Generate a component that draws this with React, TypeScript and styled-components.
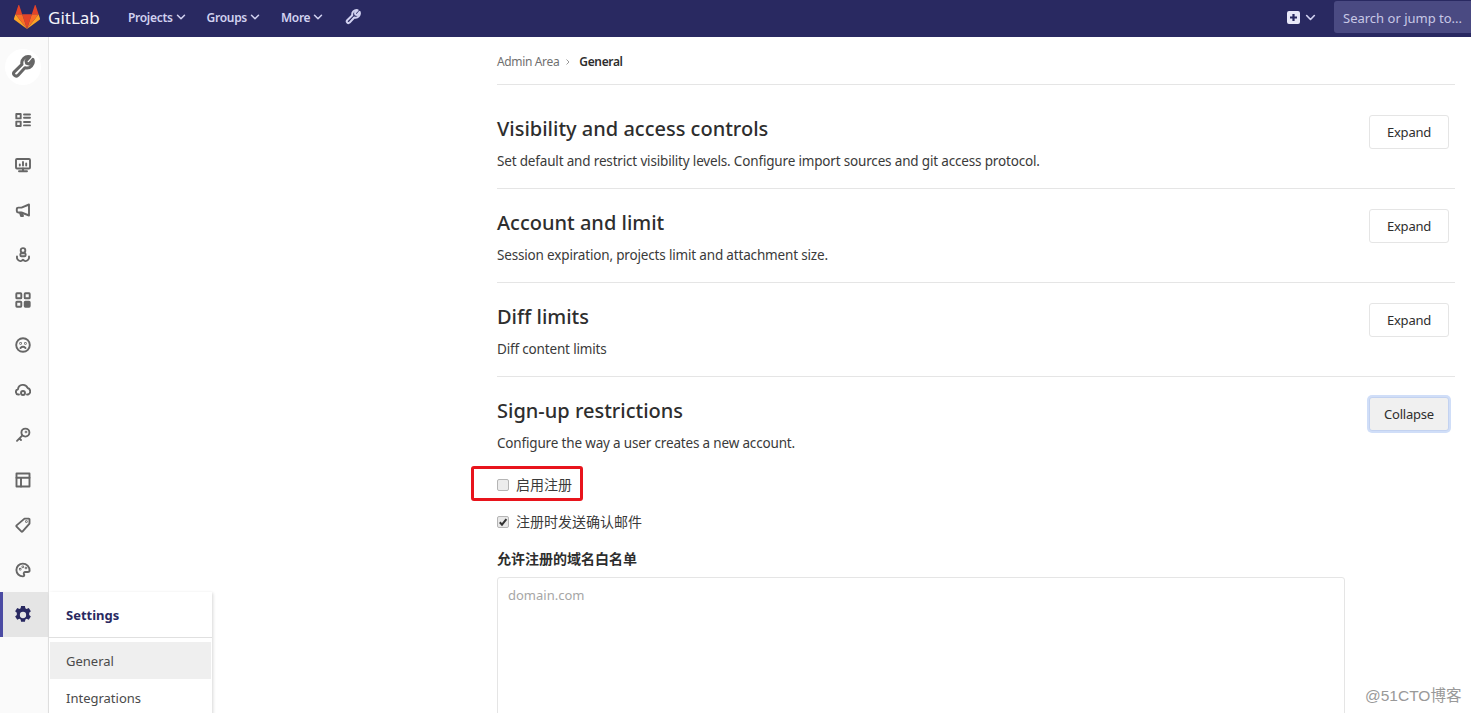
import React from "react";
import styled, { createGlobalStyle } from "styled-components";

const Global = createGlobalStyle`
  html, body { margin: 0; padding: 0; background: #fff; height: 100%; overflow: hidden; }
  body { font-family: "Noto Sans", "Noto Sans CJK SC", sans-serif; color: #2e2e2e; }
  * { box-sizing: border-box; }
`;

const Page = styled.div`
  position: relative;
  width: 1471px;
  height: 713px;
  overflow: hidden;
  display: flex;
  flex-direction: column;
`;
const Navbar = styled.header`
  height: 37px;
  flex: none;
  background: #292961;
  display: flex;
  align-items: center;
  padding: 0 0 3px 14px;
  color: #d1d1f0;
`;
const Brand = styled.div`
  display: flex;
  align-items: center;
  gap: 8px;
  width: 114px;
  font-size: 17px;
  color: #f4f4fb;
`;
const NavItem = styled.div`
  display: flex;
  align-items: center;
  gap: 3px;
  font-size: 12px;
  font-weight: 600;
  letter-spacing: -0.3px;
  margin-right: 21px;
`;
const NavWrench = styled.div`
  display: flex;
  margin-left: 1px;
`;
const NavRight = styled.div`
  margin-left: auto;
  display: flex;
  align-items: center;
`;
const PlusGroup = styled.div`
  display: flex;
  align-items: center;
  gap: 5px;
  margin-right: 18px;
`;
const Search = styled.div`
  width: 137px;
  height: 32px;
  background: #4a4a82;
  border-radius: 3px 0 0 3px;
  color: #c8c8e6;
  font-size: 13px;
  line-height: 34px;
  padding-left: 9px;
  white-space: nowrap;
`;
const Body = styled.div`
  flex: 1;
  display: flex;
  min-height: 0;
`;
const Sidebar = styled.aside`
  width: 49px;
  flex: none;
  background: #fafafa;
  border-right: 1px solid #e5e5e5;
  display: flex;
  flex-direction: column;
`;
const AdminAvatar = styled.div`
  width: 36px;
  height: 36px;
  margin: 12px 0 12px 5px;
  border-radius: 50%;
  background: #fff;
  display: flex;
  align-items: center;
  justify-content: center;
  color: #666;
`;
const SideItem = styled.div<{ $active?: boolean }>`
  width: 48px;
  height: 45px;
  flex: none;
  display: flex;
  align-items: center;
  padding-left: ${(p) => (p.$active ? "11px" : "15px")};
  color: ${(p) => (p.$active ? "#292961" : "#666")};
  background: ${(p) => (p.$active ? "#e5e5e5" : "transparent")};
  border-left: ${(p) => (p.$active ? "3px solid #4b4ba3" : "none")};
`;
const Main = styled.main`
  flex: 1;
  padding: 0 16px 0 448px;
  min-width: 0;
`;
const Breadcrumb = styled.nav`
  height: 48px;
  border-bottom: 1px solid #e5e5e5;
  display: flex;
  align-items: center;
  padding-top: 2px;
  font-size: 12px;
  letter-spacing: -0.35px;
  color: #707070;
`;
const Sep = styled.span`
  display: flex;
  margin: 0 7px 0 5px;
  color: #999;
`;
const Current = styled.span`
  color: #2e2e2e;
  font-weight: 600;
`;
const Section = styled.section<{ $open?: boolean }>`
  height: ${(p) => (p.$open ? "auto" : "94px")};
  padding-top: 20px;
  border-bottom: ${(p) => (p.$open ? "none" : "1px solid #e5e5e5")};
  position: relative;
  display: flex;
  justify-content: space-between;
  padding-right: 6px;
`;
const FirstSection = styled(Section)`
  height: 104px;
  padding-top: 30px;
`;
const SectionHead = styled.div``;
const Title = styled.h4`
  margin: 0;
  font-size: 20px;
  line-height: 28px;
  font-weight: 500;
  letter-spacing: 0;
  color: #2e2e2e;
`;
const Desc = styled.p`
  margin: 9px 0 0;
  font-size: 13.5px;
  line-height: 18px;
  letter-spacing: -0.17px;
  color: #3a3a3a;
`;
const Btn = styled.button<{ $focus?: boolean }>`
  width: 80px;
  height: 34px;
  font: inherit;
  font-size: 13px;
  letter-spacing: -0.2px;
  color: #2e2e2e;
  background: ${(p) => (p.$focus ? "#f0f0f0" : "#fff")};
  border: 1px solid ${(p) => (p.$focus ? "#c3d2f0" : "#e5e5e5")};
  border-radius: 3px;
  box-shadow: ${(p) => (p.$focus ? "0 0 0 2px #d0def8" : "none")};
  padding: 0;
`;
const Form = styled.div`
  padding-top: 24px;
`;
const CheckRow = styled.label<{ $gap?: number }>`
  display: flex;
  align-items: center;
  gap: 7px;
  font-size: 14px;
  line-height: 18px;
  color: #3a3a3a;
  margin-bottom: ${(p) => p.$gap ?? 0}px;
`;
const CheckBox = styled.span<{ $checked?: boolean }>`
  width: 12px;
  height: 12px;
  border: 1px solid #b5b5b5;
  border-radius: 2px;
  background: ${(p) => (p.$checked ? "#e8e8e8" : "#ececec")};
  display: flex;
  align-items: center;
  justify-content: center;
  color: #333;
`;
const FieldLabel = styled.div`
  font-size: 14px;
  line-height: 18px;
  font-weight: 700;
  margin: 19px 0 9px;
  color: #2e2e2e;
`;
const TextArea = styled.div`
  width: 848px;
  height: 200px;
  border: 1px solid #e5e5e5;
  border-radius: 3px;
  padding: 8px 10px;
  font-size: 13px;
  line-height: 18px;
  color: #a6a6a6;
`;
const Flyout = styled.div`
  position: absolute;
  left: 49px;
  top: 592px;
  width: 163px;
  height: 130px;
  background: #fff;
  box-shadow: 1px 1px 3px rgba(0, 0, 0, 0.16);
`;
const FlyTitle = styled.div`
  height: 46px;
  padding: 14px 0 0 17px;
  font-size: 13px;
  line-height: 18px;
  font-weight: 700;
  color: #292961;
  border-bottom: 1px solid #e0e0e0;
`;
const FlyList = styled.div`
  padding: 4px 1px 0;
`;
const FlyItem = styled.div<{ $active?: boolean }>`
  height: 37px;
  padding-left: 16px;
  font-size: 13px;
  line-height: 38px;
  color: #4a4a4a;
  background: ${(p) => (p.$active ? "#efefef" : "transparent")};
`;
const RedBox = styled.div`
  position: absolute;
  left: 471px;
  top: 466px;
  width: 112px;
  height: 35px;
  border: 3px solid #e8141c;
  border-radius: 3px;
`;
const Watermark = styled.div`
  position: absolute;
  left: 1365px;
  top: 687px;
  font-size: 15.5px;
  line-height: 18px;
  color: #999;
  font-family: "Liberation Sans", "Noto Sans CJK SC", sans-serif;
  white-space: nowrap;
`;

const Chevron = ({ s = 10 }: { s?: number }) => (
  <svg width={s} height={s} viewBox="0 0 10 10" fill="none" stroke="currentColor" strokeWidth="1.5" strokeLinecap="round" strokeLinejoin="round">
    <path d="M1.5 3.2 5 6.8l3.5-3.6" />
  </svg>
);

const WrenchPath = "M14.6 2.9a4.3 4.3 0 0 1-5.3 5.6L4.6 13.6a1.7 1.7 0 0 1-2.4-2.4l5.1-4.9A4.3 4.3 0 0 1 12.6 1.2L10 3.9l.4 1.7 1.7.4z";

const Wrench = ({ s }: { s: number }) => (
  <svg width={s} height={s} viewBox="0 0 16 16" fill="none" stroke="currentColor" strokeWidth="2" strokeLinejoin="round">
    <path d={WrenchPath} />
  </svg>
);

const Logo = () => (
  <svg width="26" height="24" viewBox="0 0 26 24">
    <path fill="#e24329" d="M13 24 17.8 9.2H8.2z" />
    <path fill="#fc6d26" d="M13 24 8.2 9.2H1.4z" />
    <path fill="#fca326" d="M1.4 9.2 0 13.6c-.1.4 0 .9.4 1.1L13 24z" />
    <path fill="#e24329" d="M1.4 9.2h6.8L5.3.4c-.2-.5-.8-.5-1 0z" />
    <path fill="#fc6d26" d="M13 24l4.8-14.8h6.8z" />
    <path fill="#fca326" d="M24.6 9.2 26 13.6c.1.4 0 .9-.4 1.1L13 24z" />
    <path fill="#e24329" d="M24.6 9.2h-6.8L20.7.4c.2-.5.8-.5 1 0z" />
  </svg>
);

const Ico = ({ children }: { children: React.ReactNode }) => (
  <svg width="16" height="16" viewBox="0 0 16 16" fill="none" stroke="currentColor" strokeWidth="1.9" strokeLinejoin="round" strokeLinecap="round">
    {children}
  </svg>
);

const sideIcons: React.ReactNode[] = [
  <Ico key="overview">
    <rect x="1.3" y="2" width="4.4" height="4.4" />
    <rect x="1.3" y="9.6" width="4.4" height="4.4" />
    <path d="M9 2.5h6M9 5.8h6M9 10h6M9 13.4h6" />
  </Ico>,
  <Ico key="monitor">
    <rect x="1" y="2" width="14" height="9.5" rx="1" />
    <path d="M8 11.5V14M4 14.3h8M4.8 8.5V7.5M8 8.5V5M11.2 8.5V6.5" />
  </Ico>,
  <Ico key="megaphone">
    <path d="M14 2.5v11L6.5 10.5H3.2a1.4 1.4 0 0 1-1.4-1.4V7a1.4 1.4 0 0 1 1.4-1.4h3.3z" />
    <path d="M5 10.8 6 14h2l-.8-2.6" />
  </Ico>,
  <Ico key="hook">
    <circle cx="8" cy="3.4" r="2.3" />
    <rect x="5.4" y="6.2" width="5.2" height="3" rx="1" />
    <path d="M2 9.5a3.8 3.8 0 0 0 3.3 4.6c1.1.2 2-.5 2.7-1.4.7.9 1.6 1.6 2.7 1.4A3.8 3.8 0 0 0 14 9.5" />
  </Ico>,
  <Ico key="apps">
    <rect x="1.3" y="1.3" width="5" height="5" rx=".6" />
    <rect x="9.7" y="1.3" width="5" height="5" rx=".6" />
    <rect x="1.3" y="9.7" width="5" height="5" rx=".6" />
    <rect x="9.7" y="9.7" width="5" height="5" rx=".6" fill="currentColor" />
  </Ico>,
  <Ico key="sad">
    <circle cx="8" cy="8" r="6.8" />
    <path d="M5.5 11c1.4-1.3 3.6-1.3 5 0" />
    <circle cx="5.6" cy="6.4" r=".4" />
    <circle cx="10.4" cy="6.4" r=".4" />
  </Ico>,
  <Ico key="cloud">
    <path d="M4 12.5H3.2A2.7 2.7 0 0 1 3 7.2 5 5 0 0 1 12.6 6a3.4 3.4 0 0 1 .4 6.5h-1" />
    <circle cx="8" cy="11" r="2" />
  </Ico>,
  <Ico key="key">
    <circle cx="10.4" cy="5.6" r="4" />
    <path d="M7.4 8.4 2 13.8M4.4 11.4 6 13" />
    <circle cx="11" cy="5" r=".4" />
  </Ico>,
  <Ico key="layout">
    <rect x="1.5" y="1.5" width="13" height="13" />
    <path d="M1.5 5.8h13M6 5.8v8.7" />
  </Ico>,
  <Ico key="label">
    <path d="M9.5 1.6h4.3a.7.7 0 0 1 .7.7v4.3L7.6 14.4a.9.9 0 0 1-1.3 0L1.6 9.7a.9.9 0 0 1 0-1.3z" />
    <circle cx="11.4" cy="4.6" r=".4" />
  </Ico>,
  <Ico key="palette">
    <path d="M14.6 8.6c0-3.8-3-7-6.8-7a6.4 6.4 0 0 0 0 12.8c1.5 0 1.8-1.2 1.2-2-.7-1-.1-2.4 1.4-2.4h2.4c1 0 1.8-.4 1.8-1.4z" />
    <circle cx="5.2" cy="7.2" r=".4" />
    <circle cx="7.8" cy="4.8" r=".4" />
    <circle cx="11" cy="6" r=".4" />
  </Ico>,
];

const Gear = () => (
  <svg width="18" height="18" viewBox="0 0 16 16" fill="currentColor">
    <path fillRule="evenodd" d="M6.3 0h3.4l.4 2.1 1.1.5 1.9-.9 1.9 2.9-1.5 1.3v2.2l1.5 1.3-1.9 2.9-1.9-.9-1.1.6-.4 2H6.3l-.4-2-1.1-.6-1.9.9-1.9-2.9 1.5-1.3V5.9L1 4.6l1.9-2.9 1.9.9 1.1-.5zM8 5.2a2.8 2.8 0 1 0 0 5.6 2.8 2.8 0 0 0 0-5.6z" />
  </svg>
);

export default function App() {
  return (
    <Page>
      <Global />
      <Navbar>
        <Brand>
          <Logo />
          <span>GitLab</span>
        </Brand>
        <NavItem>Projects <Chevron /></NavItem>
        <NavItem>Groups <Chevron /></NavItem>
        <NavItem>More <Chevron /></NavItem>
        <NavWrench><Wrench s={16} /></NavWrench>
        <NavRight>
          <PlusGroup>
            <svg width="13" height="13" viewBox="0 0 13 13">
              <path fill="#e8e8f8" fillRule="evenodd" d="M2 0h9a2 2 0 0 1 2 2v9a2 2 0 0 1-2 2H2a2 2 0 0 1-2-2V2a2 2 0 0 1 2-2zm3.4 3v2.4H3v2.2h2.4V10h2.2V7.6H10V5.4H7.6V3z" />
            </svg>
            <Chevron s={11} />
          </PlusGroup>
          <Search>Search or jump to...</Search>
        </NavRight>
      </Navbar>
      <Body>
        <Sidebar>
          <AdminAvatar><Wrench s={24} /></AdminAvatar>
          {sideIcons.map((ic, i) => <SideItem key={i}>{ic}</SideItem>)}
          <SideItem $active><Gear /></SideItem>
        </Sidebar>
        <Main>
          <Breadcrumb>
            <span>Admin Area</span>
            <Sep>
              <svg width="8" height="8" viewBox="0 0 8 8" fill="none" stroke="currentColor" strokeWidth="1"><path d="M2.5 1.5 5 4 2.5 6.5" /></svg>
            </Sep>
            <Current>General</Current>
          </Breadcrumb>
          <FirstSection>
            <SectionHead>
              <Title>Visibility and access controls</Title>
              <Desc>Set default and restrict visibility levels. Configure import sources and git access protocol.</Desc>
            </SectionHead>
            <Btn>Expand</Btn>
          </FirstSection>
          <Section>
            <SectionHead>
              <Title>Account and limit</Title>
              <Desc>Session expiration, projects limit and attachment size.</Desc>
            </SectionHead>
            <Btn>Expand</Btn>
          </Section>
          <Section>
            <SectionHead>
              <Title>Diff limits</Title>
              <Desc>Diff content limits</Desc>
            </SectionHead>
            <Btn>Expand</Btn>
          </Section>
          <Section $open>
            <SectionHead>
              <Title>Sign-up restrictions</Title>
              <Desc>Configure the way a user creates a new account.</Desc>
            </SectionHead>
            <Btn $focus>Collapse</Btn>
          </Section>
          <Form>
            <CheckRow $gap={19}>
              <CheckBox />
              启用注册
            </CheckRow>
            <CheckRow>
              <CheckBox $checked>
                <svg width="10" height="10" viewBox="0 0 10 10" fill="none" stroke="currentColor" strokeWidth="2"><path d="M1.8 5.2 4 7.6 8.4 2.2" /></svg>
              </CheckBox>
              注册时发送确认邮件
            </CheckRow>
            <FieldLabel>允许注册的域名白名单</FieldLabel>
            <TextArea>domain.com</TextArea>
          </Form>
        </Main>
      </Body>
      <Flyout>
        <FlyTitle>Settings</FlyTitle>
        <FlyList>
          <FlyItem $active>General</FlyItem>
          <FlyItem>Integrations</FlyItem>
        </FlyList>
      </Flyout>
      <RedBox />
      <Watermark>@51CTO博客</Watermark>
    </Page>
  );
}
